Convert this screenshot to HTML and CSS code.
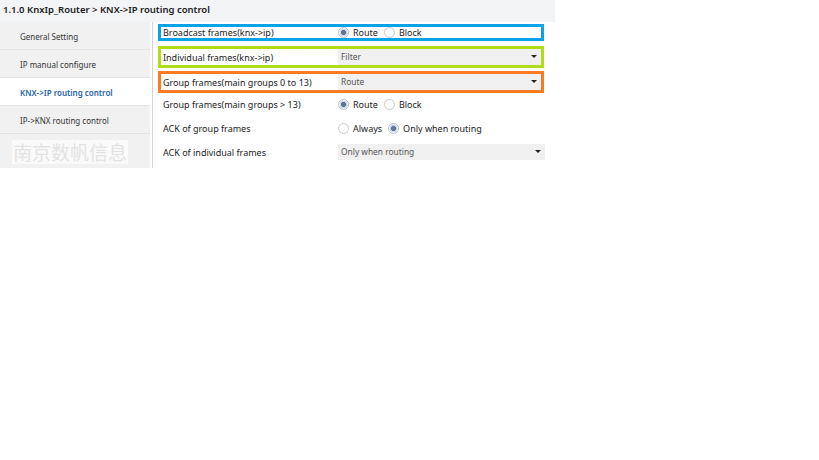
FILE: index.html
```html
<!DOCTYPE html>
<html>

<head>
	<meta charset='utf-8'>
	<title>KNX->IP routing control</title>
	<meta name='viewport' content='width=device-width, initial-scale=1'>
	<link rel="stylesheet" href="styles.css">
</head>

<body>
	<header class="title">1.1.0 KnxIp_Router &gt; KNX-&gt;IP routing control</header>
	<div class="page">
		<nav class="side">
			<div class="item">General Setting</div>
			<div class="item">IP manual configure</div>
			<div class="item active">KNX-&gt;IP routing control</div>
			<div class="item">IP-&gt;KNX routing control</div>
			<div class="mark"><span>南京数帆信息</span></div>
		</nav>
		<main class="params">
			<div class="row r1 boxed blue">
				<div class="label">Broadcast frames(knx-&gt;ip)</div>
				<div class="radios">
					<span class="radio on"></span><span class="opt">Route</span>
					<span class="radio"></span><span class="opt">Block</span>
				</div>
			</div>
			<div class="row r2 boxed green">
				<div class="label">Individual frames(knx-&gt;ip)</div>
				<div class="select">Filter<i class="caret"></i></div>
			</div>
			<div class="row r3 boxed orange">
				<div class="label">Group frames(main groups 0 to 13)</div>
				<div class="select">Route<i class="caret"></i></div>
			</div>
			<div class="row r4">
				<div class="label">Group frames(main groups &gt; 13)</div>
				<div class="radios">
					<span class="radio on"></span><span class="opt">Route</span>
					<span class="radio"></span><span class="opt">Block</span>
				</div>
			</div>
			<div class="row r5">
				<div class="label">ACK of group frames</div>
				<div class="radios">
					<span class="radio"></span><span class="opt">Always</span>
					<span class="radio on"></span><span class="opt">Only when routing</span>
				</div>
			</div>
			<div class="row r6">
				<div class="label">ACK of individual frames</div>
				<div class="select wide">Only when routing<i class="caret"></i></div>
			</div>
		</main>
	</div>
</body>

</html>
```

FILE: styles.css
```css
* {
	box-sizing: border-box;
}

body {
	margin: 0;
	background: white;
	color: #222;
	font-family: "Noto Sans", "Noto Sans CJK SC", sans-serif;
	font-size: 9px;
}

.title {
	width: 555px;
	height: 22px;
	padding: 3px 0 0 3px;
	background: #f3f4f6;
	font-size: 9.5px;
	font-weight: 600;
	color: #1a1a1a;
}

.page {
	display: flex;
	align-items: flex-start;
}

.side {
	width: 153px;
	height: 146px;
	padding-right: 2px;
	border-right: 1px solid #d4d4d4;
	background: #fff;
}

.item {
	height: 28px;
	padding: 9px 0 0 20px;
	background: #f1f1f1;
	border-bottom: 1px solid #e3e3e3;
	font-size: 8px;
	color: #333;
}

.item.active {
	background: #fff;
	color: #2563a8;
	font-weight: 600;
}

.mark {
	height: 34px;
	padding: 6px 0 0 12px;
	background: #f1f1f1;
}

.mark span {
	display: inline-block;
	padding: 0 1px;
	background: #fafafa;
	color: #e2e2e2;
	font-family: "Noto Sans CJK SC", sans-serif;
	font-size: 19px;
	line-height: 24px;
}

.params {
	display: flex;
	flex-direction: column;
	padding-left: 5px;
}

.row {
	display: flex;
	align-items: center;
	width: 386px;
	border: 3px solid transparent;
}

.r1 { margin-top: 2px; height: 17px; }
.r2 { margin-top: 5px; height: 22px; }
.r3 { margin-top: 3px; height: 22px; }
.r4 { height: 23px; }
.r5 { height: 24px; }
.r6 { height: 24px; }

.blue { border-color: #0aa3e8; }
.green { border-color: #b1dc16; }
.orange { border-color: #fb7b22; }

.label {
	flex-shrink: 0;
	width: 177px;
	padding-left: 2px;
	color: #222;
}

.radios {
	display: flex;
	align-items: center;
}

.radio {
	width: 11px;
	height: 11px;
	border: 1px solid #c9c9c9;
	border-radius: 50%;
	background: #fff;
}

.radio.on {
	border-color: #b5bfcc;
	background: radial-gradient(circle, #5d7796 0 2.2px, #c9d4e2 2.8px 3.6px, #fff 4px);
}

.opt {
	margin: 0 6px 0 4px;
}

.select {
	flex-shrink: 0;
	position: relative;
	width: 203px;
	height: 16px;
	padding: 2px 0 0 3px;
	background: #f0f0f0;
	color: #555;
	font-size: 8.4px;
}

.select.wide {
	width: 207px;
}

.caret {
	position: absolute;
	right: 4px;
	top: 6px;
	border-left: 3px solid transparent;
	border-right: 3px solid transparent;
	border-top: 3.5px solid #222;
}
```
